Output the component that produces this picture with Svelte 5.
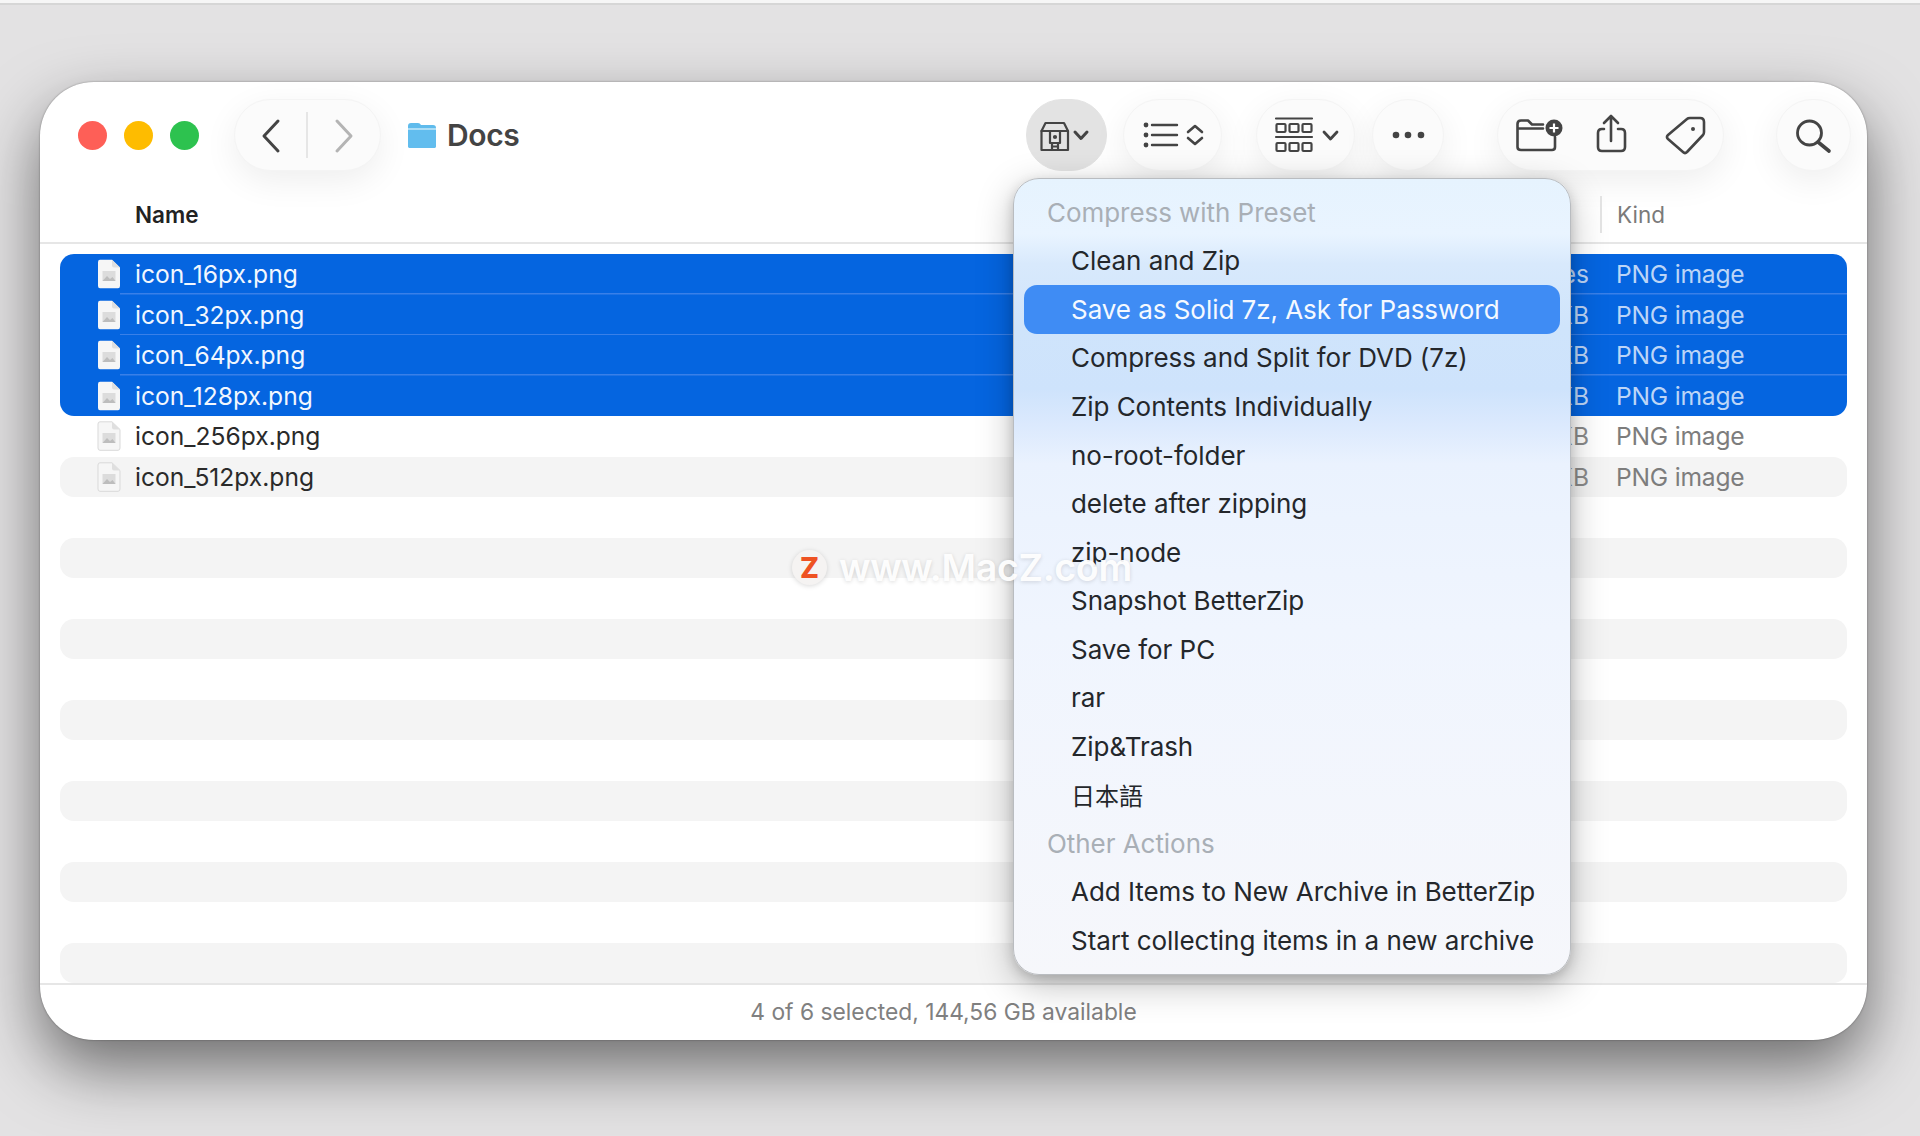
<script>
  const files = [
    { name: 'icon_16px.png', size: '24 bytes', sel: true },
    { name: 'icon_32px.png', size: '2 KB', sel: true },
    { name: 'icon_64px.png', size: '4 KB', sel: true },
    { name: 'icon_128px.png', size: '12 KB', sel: true },
    { name: 'icon_256px.png', size: '36 KB', sel: false },
    { name: 'icon_512px.png', size: '90 KB', sel: false }
  ];
  const rows = [...files, ...Array(12).fill(null)];
  const menu = [
    { t: 'Compress with Preset', h: true },
    { t: 'Clean and Zip' },
    { t: 'Save as Solid 7z, Ask for Password', a: true },
    { t: 'Compress and Split for DVD (7z)' },
    { t: 'Zip Contents Individually' },
    { t: 'no-root-folder' },
    { t: 'delete after zipping' },
    { t: 'zip-node' },
    { t: 'Snapshot BetterZip' },
    { t: 'Save for PC' },
    { t: 'rar' },
    { t: 'Zip&Trash' },
    { t: '日本語', c: true },
    { t: 'Other Actions', h: true },
    { t: 'Add Items to New Archive in BetterZip' },
    { t: 'Start collecting items in a new archive' }
  ];
</script>

<div class="page">
<div class="topstrip"></div>
<div class="window">
  <header class="toolbar">
    <div class="lights">
      <span class="light red"></span>
      <span class="light yellow"></span>
      <span class="light green"></span>
    </div>
    <div class="pill nav">
      <svg width="73" height="72" viewBox="0 0 73 72"><path d="M44 22 L30 37 L44 52" class="ic" stroke-width="3"/></svg>
      <span class="navsep"></span>
      <svg width="73" height="72" viewBox="0 0 73 72"><path d="M31 22 L45 37 L31 52" class="ic off" stroke-width="3"/></svg>
    </div>
    <svg class="folder" width="30" height="27" viewBox="0 0 30 27">
      <path d="M1 4 Q1 1 4 1 H11 Q13 1 14 3 H26 Q29 3 29 6 V24 Q29 26 26 26 H4 Q1 26 1 24 Z" fill="#5fbbec"/>
      <path d="M1 8 H29 V24 Q29 26 26 26 H4 Q1 26 1 24 Z" fill="#62bdee"/>
      <path d="M1 7 H29" stroke="#c4e8fa" stroke-width="1.5"/>
    </svg>
    <h1 class="title">Docs</h1>

    <div class="pill active">
      <svg width="81" height="72" viewBox="0 0 81 72">
        <g class="ic" stroke-width="2.2">
          <path d="M15.500 32 L19.500 24 H38 L42 32 V51 H15.500 Z"/>
          <path d="M15.500 32 H42"/>
          <rect x="24" y="32" width="10" height="12"/>
          <path d="M26 44 V51 M32 44 V51 M26 47.500 H32"/>
          <circle cx="29" cy="38" r="1" fill="#444"/>
          <path d="M49 33 L55 39.500 L61 33" stroke-width="3"/>
        </g>
      </svg>
    </div>
    <div class="pill viewlist">
      <svg width="99" height="72" viewBox="0 0 99 72">
        <g fill="#444"><circle cx="23" cy="26" r="2.4"/><circle cx="23" cy="36" r="2.4"/><circle cx="23" cy="46" r="2.4"/></g>
        <g class="ic" stroke-width="2.4">
          <path d="M29 26 H54 M29 36 H54 M29 46 H54"/>
          <path d="M65 33 L72 27 L79 33 M65 39 L72 45 L79 39" stroke-width="2.6"/>
        </g>
      </svg>
    </div>
    <div class="pill group">
      <svg width="99" height="72" viewBox="0 0 99 72">
        <g class="ic" stroke-width="2.2">
          <path d="M20 19.500 H56 M20 38 H56"/>
          <rect x="20.500" y="25" width="9" height="8" rx="1"/><rect x="33.500" y="25" width="9" height="8" rx="1"/><rect x="46.500" y="25" width="9" height="8" rx="1"/>
          <rect x="20.500" y="44" width="9" height="8" rx="1"/><rect x="33.500" y="44" width="9" height="8" rx="1"/><rect x="46.500" y="44" width="9" height="8" rx="1"/>
          <path d="M68 33 L74.500 40 L81 33" stroke-width="2.800"/>
        </g>
      </svg>
    </div>
    <div class="pill more">
      <svg width="72" height="72" viewBox="0 0 72 72" fill="#444">
        <circle cx="24" cy="36" r="3.300"/><circle cx="36" cy="36" r="3.300"/><circle cx="49" cy="36" r="3.300"/>
      </svg>
    </div>
    <div class="pill actions">
      <svg width="227" height="72" viewBox="0 0 227 72">
        <g class="ic" stroke-width="2.6">
          <path d="M20.500 30 V25 Q20.500 21.500 24 21.500 H31 L35 25.500 H46 M20.500 29.500 H46 M20.500 29.500 V48 Q20.500 51 24 51 H55 Q58 51 58 48 V38"/>
          <path d="M107 30 H105 Q101 30 101 34 V48 Q101 52 105 52 H124 Q128 52 128 48 V34 Q128 30 124 30 H121"/>
          <path d="M114 17 V42 M107 24 L114 17 L121 24"/>
          <path d="M171 36 L190 20 Q191 19 193 19 H203 Q207 19 207 23 V33 Q207 35 206 36 L190 53 Q188 55 186 53 L171 40 Q169 38 171 36 Z"/>
        </g>
        <circle cx="57" cy="29" r="8.500" fill="#444"/>
        <path d="M57 24.500 V33.500 M52.500 29 H61.500" stroke="#fff" stroke-width="2.200"/>
        <circle cx="196" cy="30" r="2" fill="#444"/>
      </svg>
    </div>
    <div class="pill search">
      <svg width="75" height="72" viewBox="0 0 75 72">
        <g class="ic" stroke-width="2.800">
          <circle cx="33.500" cy="34" r="12"/>
          <path d="M42 43 L53 52" stroke-width="3.600"/>
        </g>
      </svg>
    </div>
  </header>

  <div class="columns">
    <span class="colname">Name</span>
    <span class="colkind">Kind</span>
  </div>

  <div class="list">
    {#each rows as r, i}
      <div class="row" class:sel={r && r.sel} class:stripe={!(r && r.sel) && i % 2 === 1} class:first={i === 0} class:last={i === 3}>
        {#if r}
          <svg class="file" width="24" height="30" viewBox="0 0 24 30">
            <path d="M1 3 Q1 .8 3 .8 H15 L23 8.500 V27 Q23 29.300 21 29.300 H3 Q1 29.300 1 27 Z" fill="#f6f6f6" stroke={r.sel ? 'none' : '#d9d9d9'}/>
            <path d="M15 .8 V6.500 Q15 8.500 17 8.500 H23 Z" fill="#dfdfdf"/>
            <rect x="5.500" y="12" width="13" height="10" fill="#dcdcdc"/>
            <path d="M5.500 22 L10 17 L13 20 L15.500 18 L18.500 22 Z" fill="#bdbdbd"/>
          </svg>
          <span class="name">{r.name}</span>
          <span class="size">{r.size}</span>
          <span class="kind">PNG image</span>
        {/if}
      </div>
    {/each}
  </div>

  <footer class="status">4 of 6 selected, 144,56 GB available</footer>

  <div class="menu">
    {#each menu as m}
      <div class="mi" class:head={m.h} class:on={m.a} class:cjk={m.c}>{m.t}</div>
    {/each}
  </div>

  <div class="mark">
    <span class="badge">Z</span>
    <span>www.MacZ.com</span>
  </div>
</div>
</div>

<style>
  :global(body) {
    margin: 0;
    background: #e3e2e3;
    font-family: Inter, "Noto Sans CJK SC", sans-serif;
  }
  .page {
    height: 1136px;
    overflow: hidden;
  }
  .topstrip {
    height: 3px;
    background: #f6f6f6;
    border-bottom: 2px solid #d6d6d6;
  }
  .window {
    position: relative;
    box-sizing: border-box;
    width: 1827px;
    height: 958px;
    margin: 77px 0 0 40px;
    background: #fff;
    border-radius: 54px;
    display: flex;
    flex-direction: column;
    box-shadow:
      0 0 2px rgba(0, 0, 0, 0.4),
      0 28px 64px rgba(0, 0, 0, 0.52);
  }
  .toolbar {
    display: flex;
    align-items: center;
    box-sizing: border-box;
    height: 89px;
    padding: 17px 16px 0 38px;
    flex: none;
  }
  .lights { display: flex; gap: 17px; }
  .light { width: 29px; height: 29px; border-radius: 50%; }
  .red { background: #fe5f57; }
  .yellow { background: #febc00; }
  .green { background: #2dc24f; }
  .pill {
    height: 72px;
    box-sizing: border-box;
    border-radius: 36px;
    background: #fbfbfb;
    border: 1.5px solid #f4f4f4;
    box-shadow: 0 10px 34px rgba(0, 0, 0, 0.07);
    display: flex;
    align-items: center;
    flex: none;
  }
  .pill svg { margin: -1.5px; flex: none; }
  .ic {
    fill: none;
    stroke: #444;
    stroke-linecap: round;
    stroke-linejoin: round;
  }
  .ic.off { stroke: #b4b4b4; }
  .nav { width: 147px; margin-left: 35px; }
  .navsep { width: 1.5px; height: 46px; background: #e6e6e6; flex: none; margin-left: 1px; }
  .folder { margin-left: 26px; flex: none; }
  .title {
    margin: 0 0 0 10px;
    font-size: 30px;
    font-weight: 600;
    color: #444;
    letter-spacing: -0.4px;
    width: 579px;
    flex: none;
  }
  .active { width: 81px; background: #e3e3e3; border-color: #e3e3e3; box-shadow: none; }
  .viewlist { width: 99px; margin-left: 16px; }
  .group { width: 99px; margin-left: 34px; }
  .more { width: 72px; margin-left: 17px; }
  .actions { width: 227px; margin-left: 53px; }
  .search { width: 75px; margin-left: 52px; }

  .columns {
    height: 71px;
    padding-top: 13px;
    box-sizing: border-box;
    border-bottom: 2px solid #e6e6e6;
    margin-top: 2px;
    display: flex;
    align-items: center;
    font-size: 22.500px;
    flex: none;
  }
  .colname { margin-left: 95px; font-weight: 600; color: #222; }
  .colkind {
    margin-left: auto;
    width: 250px;
    padding-left: 15px;
    border-left: 2px solid #e4e4e4;
    line-height: 37px;
    color: #7a7a7a;
  }
  .list {
    flex: 1;
    min-height: 0;
    overflow: hidden;
    padding: 10px 20px 0;
    display: flex;
    flex-direction: column;
  }
  .row {
    flex: none;
    height: 40.500px;
    box-sizing: border-box;
    display: grid;
    grid-template-columns: 23px 1fr auto 231px;
    align-items: center;
    padding-left: 37px;
    font-size: 24.600px;
    color: #2a2a2a;
    border-radius: 14px;
  }
  .stripe { background: #f4f4f4; }
  .sel {
    background:
      linear-gradient(#3a80e8, #3a80e8) no-repeat 60px 100% / calc(100% - 60px) 1.500px,
      #0565e0;
    color: #f2f7fe;
    border-radius: 0;
  }
  .first { border-radius: 14px 14px 0 0; }
  .last {
    background: #0565e0;
    border-radius: 0 0 14px 14px;
  }
  .name { margin-left: 15px; }
  .size { margin-right: 27px; color: #8a8a8a; }
  .kind { color: #7d7d7d; letter-spacing: -0.2px; }
  .sel .size, .sel .kind { color: #bcd5f7; }

  .status {
    flex: none;
    height: 57px;
    box-sizing: border-box;
    border-top: 2px solid #e6e6e6;
    padding: 0 20px 3px 0;
    display: flex;
    align-items: center;
    justify-content: center;
    font-size: 22.800px;
    color: #808080;
  }

  .menu {
    position: absolute;
    left: 973px;
    top: 96px;
    width: 558px;
    height: 797px;
    box-sizing: border-box;
    padding-top: 9px;
    border-radius: 26px;
    border: 1px solid #b9bcc0;
    background:
      linear-gradient(
        180deg,
        #e6f3fe 0,
        #e9f4ff 55px,
        #d8e9fc 85px,
        #cfe4fb 150px,
        #cee3fc 210px,
        #dbe9fd 245px,
        #eaf2fe 285px,
        #f0f5fe 450px,
        #f6f7fb 797px
      );
    box-shadow:
      0 4px 12px rgba(0, 0, 0, 0.16),
      0 10px 36px rgba(0, 0, 0, 0.26);
    font-size: 26px;
    letter-spacing: -0.05px;
    color: #24272b;
  }
  .mi {
    height: 48.550px;
    display: flex;
    align-items: center;
    margin: 0 10px;
    border-radius: 13px;
    padding-left: 47px;
    white-space: nowrap;
  }
  .head { color: #a9afb6; padding-left: 23px; }
  .on { background: #3f8cf4; color: #f5f9ff; }
  .cjk { font-size: 24px; }

  .mark {
    position: absolute;
    left: 752px;
    top: 463px;
    display: flex;
    align-items: center;
    gap: 12px;
    font-size: 37.500px;
    font-weight: 600;
    color: rgba(255, 255, 255, 0.95);
    text-shadow: 0 1px 4px rgba(0, 0, 0, 0.14);
    letter-spacing: -0.3px;
    white-space: nowrap;
    pointer-events: none;
  }
  .badge {
    width: 35px;
    height: 35px;
    border-radius: 50%;
    background: #f5f3f2;
    color: #ee5222;
    font-size: 28px;
    font-weight: 800;
    display: flex;
    align-items: center;
    justify-content: center;
    text-shadow: none;
    letter-spacing: 0;
    box-shadow: 0 1px 5px rgba(0,0,0,.15);
  }
</style>
